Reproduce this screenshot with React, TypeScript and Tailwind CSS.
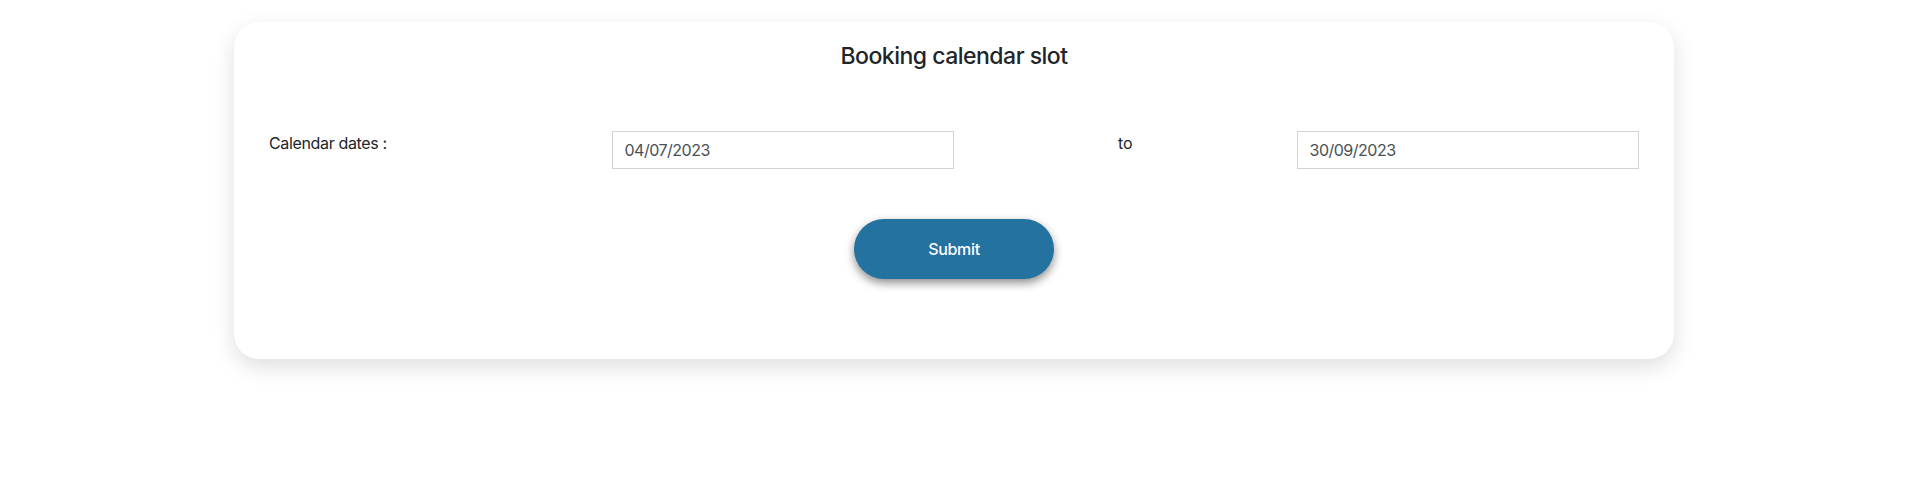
export default function App() {
  return (
    <div className="min-h-[480px] bg-white pt-[22px] pr-[4px] font-['Inter',sans-serif] text-[#212529]">
      <div className="mx-auto w-[1440px] rounded-[25px] bg-white px-[35px] pt-[18px] pb-[80px] shadow-[0_8px_22px_rgba(0,0,0,0.13)]">
        <h2 className="text-center text-[23px] leading-[32px] font-medium tracking-[-0.5px]">Booking calendar slot</h2>

        <div className="mt-[59px] grid grid-cols-4 items-start">
          <label className="text-base leading-6 tracking-[-0.35px]">Calendar dates :</label>
          <input
            type="text"
            defaultValue="04/07/2023"
            className="h-[38px] w-full border border-[#ced4da] bg-white px-3 text-base tracking-[-0.5px] text-[#495057] outline-none"
          />
          <div className="text-center text-base leading-6">to</div>
          <input
            type="text"
            defaultValue="30/09/2023"
            className="h-[38px] w-full border border-[#ced4da] bg-white px-3 text-base tracking-[-0.5px] text-[#495057] outline-none"
          />
        </div>

        <div className="mt-[50px] flex justify-center">
          <button className="h-[60px] w-[200px] rounded-full bg-[#24729f] text-base font-medium tracking-[-0.3px] text-white shadow-[0_4px_10px_rgba(0,0,0,0.45)]">
            Submit
          </button>
        </div>
      </div>
    </div>
  )
}
